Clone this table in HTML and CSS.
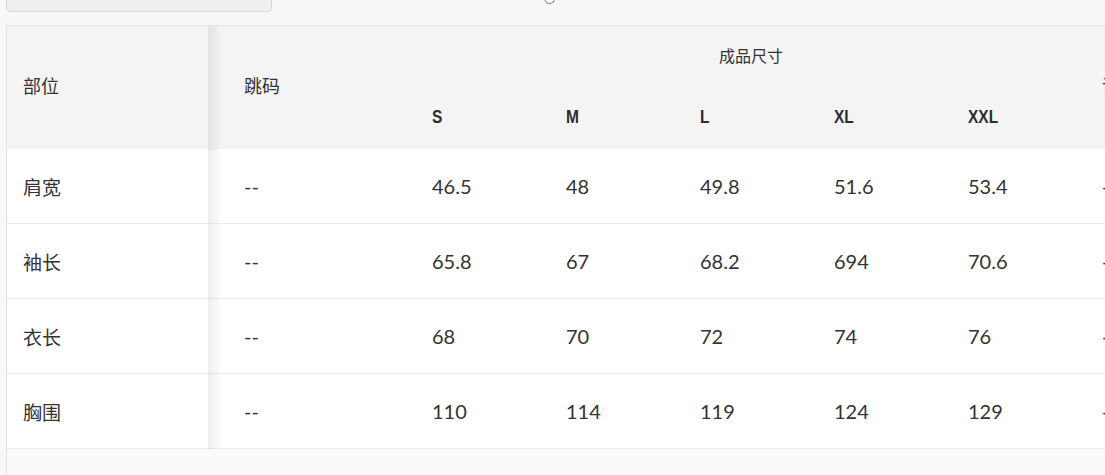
FILE: index.html
```html
<!DOCTYPE html>
<html lang="zh">
<head>
<meta charset="utf-8">
<title>尺码表</title>
<link rel="stylesheet" href="styles.css">
</head>
<body>
<div class="topbar">
  <div class="search-box"></div>
  <span class="spinner"></span>
</div>
<div class="table-wrap">
  <table class="size-table">
    <colgroup>
      <col class="c-part"><col class="c-jump">
      <col class="c-size"><col class="c-size"><col class="c-size"><col class="c-size"><col class="c-size"><col class="c-size">
    </colgroup>
    <thead>
      <tr class="row-group">
        <th rowspan="2" class="sticky cn-head">部位</th>
        <th rowspan="2" class="jump cn-head">跳码</th>
        <th colspan="5" class="group">成品尺寸</th>
        <th rowspan="2" class="cn-head">误差</th>
      </tr>
      <tr class="row-sizes">
        <th><span class="size-lbl">S</span></th>
        <th><span class="size-lbl">M</span></th>
        <th><span class="size-lbl">L</span></th>
        <th><span class="size-lbl">XL</span></th>
        <th><span class="size-lbl">XXL</span></th>
      </tr>
    </thead>
    <tbody>
      <tr><td class="sticky">肩宽</td><td class="jump">--</td><td>46.5</td><td>48</td><td>49.8</td><td>51.6</td><td>53.4</td><td>--</td></tr>
      <tr><td class="sticky">袖长</td><td class="jump">--</td><td>65.8</td><td>67</td><td>68.2</td><td>694</td><td>70.6</td><td>--</td></tr>
      <tr><td class="sticky">衣长</td><td class="jump">--</td><td>68</td><td>70</td><td>72</td><td>74</td><td>76</td><td>--</td></tr>
      <tr><td class="sticky">胸围</td><td class="jump">--</td><td>110</td><td>114</td><td>119</td><td>124</td><td>129</td><td>--</td></tr>
    </tbody>
  </table>
</div>
</body>
</html>
```

FILE: styles.css
```css
html, body {
  margin: 0;
  padding: 0;
}
body {
  background: #f8f8f8;
  overflow: hidden;
  font-family: "Lato", "Noto Sans CJK SC", sans-serif;
  color: #333;
  height: 475px;
}
.topbar {
  position: relative;
  display: flex;
  align-items: flex-end;
  height: 12px;
  padding-left: 6px;
}
.search-box {
  flex: none;
  width: 266px;
  height: 32px;
  box-sizing: border-box;
  border: 1px solid #d8d8d8;
  border-radius: 4px;
  background: #efefef;
}
.spinner {
  position: absolute;
  left: 544px;
  top: -7px;
  width: 9px;
  height: 9px;
  border: 1.5px solid #7a7a7a;
  border-radius: 50%;
  background: #fafafa;
}
.table-wrap {
  margin: 13px 0 0 6px;
  height: 450px;
  border-left: 1px solid #e2e2e2;
  border-top: 1px solid #e2e2e2;
  overflow: hidden;
  background: #fafafa;
}
.size-table {
  border-collapse: collapse;
  table-layout: fixed;
  width: 1213px;
}
.c-part { width: 201px; }
.c-jump { width: 208px; }
.c-size { width: 134px; }
th, td {
  padding: 0 0 0 16px;
  text-align: left;
  vertical-align: middle;
  white-space: nowrap;
}
thead th {
  background: #f4f4f4;
  font-weight: normal;
}
.cn-head {
  font-size: 18px;
  font-family: "Noto Sans CJK SC", sans-serif;
  padding-bottom: 5px;
}
.row-group { height: 61px; }
.row-sizes { height: 62px; }
.group {
  text-align: center;
  padding: 0;
  vertical-align: bottom;
  padding-bottom: 20px;
  font-family: "Noto Sans CJK SC", sans-serif;
  font-size: 16px;
}
.size-lbl {
  display: inline-block;
  font-family: "Liberation Sans", sans-serif;
  font-weight: bold;
  font-size: 18px;
  transform: scaleX(0.86);
  transform-origin: left center;
  color: #2d2d2d;
}
.row-sizes th {
  vertical-align: top;
  padding-top: 20px;
}
tbody td {
  background: #fff;
  height: 74px;
  border-bottom: 1px solid #ebebeb;
  font-size: 20px;
}
tbody td.sticky {
  font-family: "Noto Sans CJK SC", sans-serif;
  font-size: 19px;
}
.jump {
  padding-left: 36px;
}
.sticky {
  position: relative;
}
.sticky::after {
  content: "";
  position: absolute;
  top: 0;
  bottom: -1px;
  right: -14px;
  width: 14px;
  background: linear-gradient(to right, rgba(0,0,0,0.07), rgba(0,0,0,0));
  z-index: 1;
}
```
